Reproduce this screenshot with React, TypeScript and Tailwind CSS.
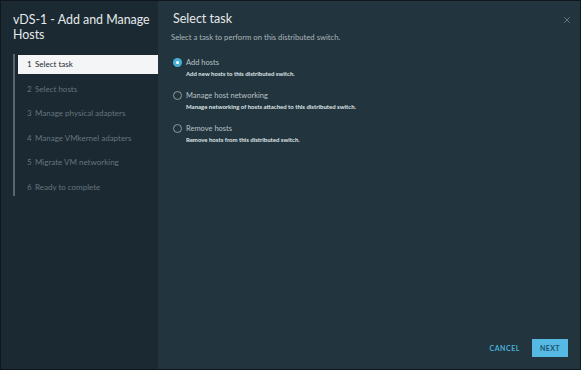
import { X } from 'lucide-react';

const STEPS = [
  'Select task',
  'Select hosts',
  'Manage physical adapters',
  'Manage VMkernel adapters',
  'Migrate VM networking',
  'Ready to complete',
];

const TASKS = [
  { label: 'Add hosts', desc: 'Add new hosts to this distributed switch.' },
  { label: 'Manage host networking', desc: 'Manage networking of hosts attached to this distributed switch.' },
  { label: 'Remove hosts', desc: 'Remove hosts from this distributed switch.' },
];

export default function App() {
  const selected = 0;

  return (
    <div className="w-[581px] h-[370px] bg-[#0f171c] p-px font-['Lato','Noto_Sans',sans-serif]">
      <div className="flex h-full w-full">
        {/* Steps */}
        <aside className="w-[157px] shrink-0 bg-[#1b2932] pt-[12px]">
          <h1 className="pl-[12px] text-[12.4px] leading-[14.5px] text-[#e6e9eb]">
            vDS-1 - Add and Manage Hosts
          </h1>
          <ol className="ml-[12px] mt-[12px] border-l-2 border-[#5a666d] pt-[1px]">
            {STEPS.map((s, i) => (
              <li
                key={s}
                className={
                  i === selected
                    ? 'ml-[3px] mb-[6px] h-[18.5px] flex items-center bg-[#f4f5f6] text-[#1b2932] text-[8px] pl-[9px]'
                    : 'ml-[3px] mb-[6px] last:mb-[2px] h-[18.5px] flex items-center text-[#66747c] text-[8px] pl-[9px]'
                }
              >
                <span className="w-[8px]">{i + 1}</span>
                {s}
              </li>
            ))}
          </ol>
        </aside>

        {/* Content */}
        <main className="flex-1 bg-[#22343d] flex flex-col relative">
          <button className="absolute right-[8px] top-[14px] text-[#8e9ba2]">
            <X size={10} strokeWidth={1.5} />
          </button>
          <div className="flex-1 pl-[13px] pt-[10px]">
            <h2 className="pl-[2px] text-[12.5px] leading-[15px] text-[#e6e9eb]">Select task</h2>
            <p className="mt-[6px] text-[7.7px] text-[#a9b5ba]">
              Select a task to perform on this distributed switch.
            </p>
            <div className="mt-[13px] flex flex-col gap-[12px] pl-[2px]">
              {TASKS.map((t, i) => (
                <div key={t.label}>
                  <div className="flex items-center gap-[4px]">
                    {i === selected ? (
                      <span className="w-[9px] h-[9px] rounded-full bg-[#49afd9] flex items-center justify-center">
                        <span className="w-[3px] h-[3px] rounded-full bg-white" />
                      </span>
                    ) : (
                      <span className="w-[9px] h-[9px] rounded-full border border-[#8e9ba2]" />
                    )}
                    <span className="text-[7.5px] text-[#b9c3c8]">{t.label}</span>
                  </div>
                  <p className="mt-[1px] pl-[13px] text-[6px] font-bold text-[#dfe4e6]">{t.desc}</p>
                </div>
              ))}
            </div>
          </div>
          <div className="flex items-center justify-end gap-[10px] pr-[12px] pb-[12px]">
            <button className="text-[7px] font-bold tracking-[0.08em] text-[#49afd9] px-[2px]">CANCEL</button>
            <button className="w-[36px] h-[18px] bg-[#56b9e3] text-[7px] font-bold tracking-[0.06em] text-[#1d4f6e]">NEXT</button>
          </div>
        </main>
      </div>
    </div>
  );
}
